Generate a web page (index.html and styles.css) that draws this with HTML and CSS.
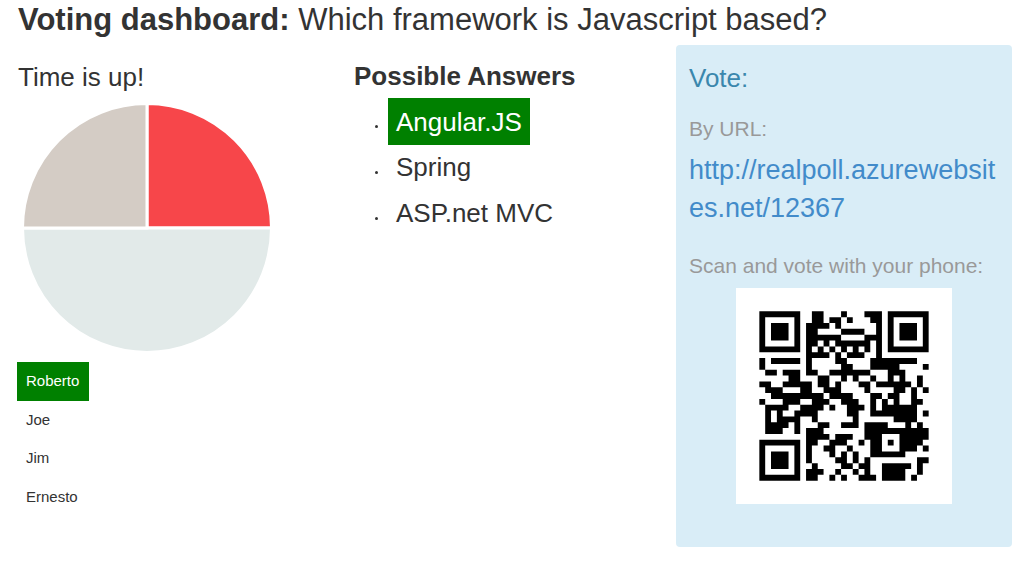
FILE: index.html
```html
<!DOCTYPE html>
<html lang="en">
<head>
    <meta charset="UTF-8">
    <title>Voting dashboard</title>
    <link rel="stylesheet" href="styles.css">
</head>
<body>
    <h1 class="title"><strong>Voting dashboard:</strong> Which framework is Javascript based?</h1>
    <div class="columns">
        <div class="col-timer">
            <p class="timer">Time is up!</p>
            <svg class="pie" width="256" height="256" viewBox="0 0 256 256">
                <path d="M128 128V3.5A124.5 124.5 0 0 1 252.5 128Z" fill="#f7464a" stroke="#fff" stroke-width="3"/>
                <path d="M128 128H252.5A124.5 124.5 0 0 1 3.5 128Z" fill="#e2eaE9" stroke="#fff" stroke-width="3"/>
                <path d="M128 128H3.5A124.5 124.5 0 0 1 128 3.5Z" fill="#d4ccc5" stroke="#fff" stroke-width="3"/>
            </svg>
            <ul class="voters">
                <li class="voter active">Roberto</li>
                <li class="voter">Joe</li>
                <li class="voter">Jim</li>
                <li class="voter">Ernesto</li>
            </ul>
        </div>
        <div class="col-answers">
            <h2 class="answers-title">Possible Answers</h2>
            <ul class="answers">
                <li><span class="answer correct">Angular.JS</span></li>
                <li><span class="answer">Spring</span></li>
                <li><span class="answer">ASP.net MVC</span></li>
            </ul>
        </div>
        <div class="vote-panel">
            <h3 class="vote-title">Vote:</h3>
            <p class="vote-label">By URL:</p>
            <a class="vote-link" href="#">http://realpoll.azurewebsites.net/12367</a>
            <p class="vote-label vote-label-scan">Scan and vote with your phone:</p>
            <div class="qr-box">
                <svg class="qr" width="216" height="216" viewBox="0 0 37 37"><path id="qr-path" transform="translate(4 4)"/></svg>
            </div>
        </div>
    </div>

    <script>
        // QR modules, one string per row
        const rows = [
            '1111111 0 0110001000111 0 1111111',
            '1000001 0 0110110100011 0 1000001',
            '1011101 0 1111010000001 0 1011101',
            '1011101 0 1100001111001 0 1011101',
            '1011101 0 1111110000111 0 1011101',
            '1000001 0 1101011111101 0 1000001',
            '1111111 0 1010101010101 0 1111111',
            '0000000 0 1111010111001 0 0000000',
            '1011111 0 1000011000011 1 1111100',
            '1000000 0 1000001100011 1 1100001',
            '0110111 0 1100111111100 0 1110000',
            '0000011 0 0011001010010 0 1010010',
            '1100111 1 1011010001101 1 1111010',
            '0111000 1 1001110000100 0 0110101',
            '0011111 1 1110111100011 0 1100100',
            '1000111 0 0111001110010 1 0100110',
            '0111100 1 1110100111010 1 1111100',
            '0101001 1 1100000110011 1 1111101',
            '0101111 0 0100000010000 0 0111100',
            '0111101 0 0011001110111 1 0001010',
            '0111001 0 1110000000111 1 1111111',
            '0000000 0 1111011100111 0 0011111',
            '1111111 0 1100111001011 0 1011110',
            '1000001 0 1001100100011 0 0011101',
            '1011101 0 1000101010011 1 1110000',
            '1011101 0 1000011010100 0 0000011',
            '1011101 0 0100001101100 1 1111010',
            '1000001 0 1110010010100 1 1110010',
            '1111111 0 1100101001110 1 1110100'
        ];
        let d = '';
        rows.forEach((row, y) => {
            row.replace(/ /g, '').split('').forEach((cell, x) => {
                if (cell === '1') d += `M${x} ${y}h1v1h-1z`;
            });
        });
        document.getElementById('qr-path').setAttribute('d', d);
    </script>
</body>
</html>
```

FILE: styles.css
```css
body {
    margin: 0;
    padding-left: 18px;
    background-color: #fff;
    color: #333;
    font-family: "Liberation Sans", Arial, sans-serif;
}
.title {
    margin: 0;
    height: 45px;
    font-size: 31px;
    line-height: 40px;
    font-weight: normal;
}
.columns {
    display: flex;
}
.col-timer {
    width: 336px;
}
.timer {
    margin: 0;
    font-size: 26px;
    line-height: 64px;
    height: 57px;
}
.pie {
    display: block;
    margin-left: 0.5px;
    margin-top: -2px;
}
.voters {
    list-style: none;
    margin: 6px 0 0 -1px;
    padding: 0;
    width: 72px;
}
.voter {
    height: 38.5px;
    line-height: 38px;
    padding-left: 9px;
    font-size: 15px;
}
.voter.active {
    background-color: #008000;
    color: #fff;
}
.col-answers {
    width: 322px;
}
.answers-title {
    margin: 0;
    font-size: 26px;
    line-height: 63px;
    height: 53px;
}
.answers {
    margin: 0;
    padding-left: 31px;
    font-size: 26px;
    list-style: none;
}
.answers li {
    height: 46px;
    display: flex;
    align-items: center;
}
.answers li::before {
    content: "";
    width: 3px;
    height: 3px;
    border-radius: 50%;
    background-color: #333;
    margin: 10px 10.5px 0 -10.5px;
}
.answer {
    padding: 8px;
    line-height: 31px;
}
.answer.correct {
    padding: 9px 8px 7px;
    background-color: #008000;
    color: #fff;
}
.vote-panel {
    box-sizing: border-box;
    width: 336px;
    height: 502px;
    padding: 0 13px;
    background-color: #d9edf7;
    border-radius: 4px;
}
.vote-title {
    margin: 0;
    color: #3a87ad;
    font-size: 26px;
    font-weight: normal;
    line-height: 66px;
    height: 66px;
}
.vote-label {
    margin: 0;
    color: #999;
    font-size: 21px;
    line-height: 36px;
}
.vote-label-scan {
    margin-top: 21px;
}
.vote-link {
    display: block;
    color: #428bca;
    font-size: 27px;
    line-height: 38px;
    margin-top: 4px;
    text-decoration: none;
    word-break: break-all;
}
.qr-box {
    width: 216px;
    height: 216px;
    margin: 4px auto 0;
    background-color: #fff;
}
.qr {
    display: block;
}
```
